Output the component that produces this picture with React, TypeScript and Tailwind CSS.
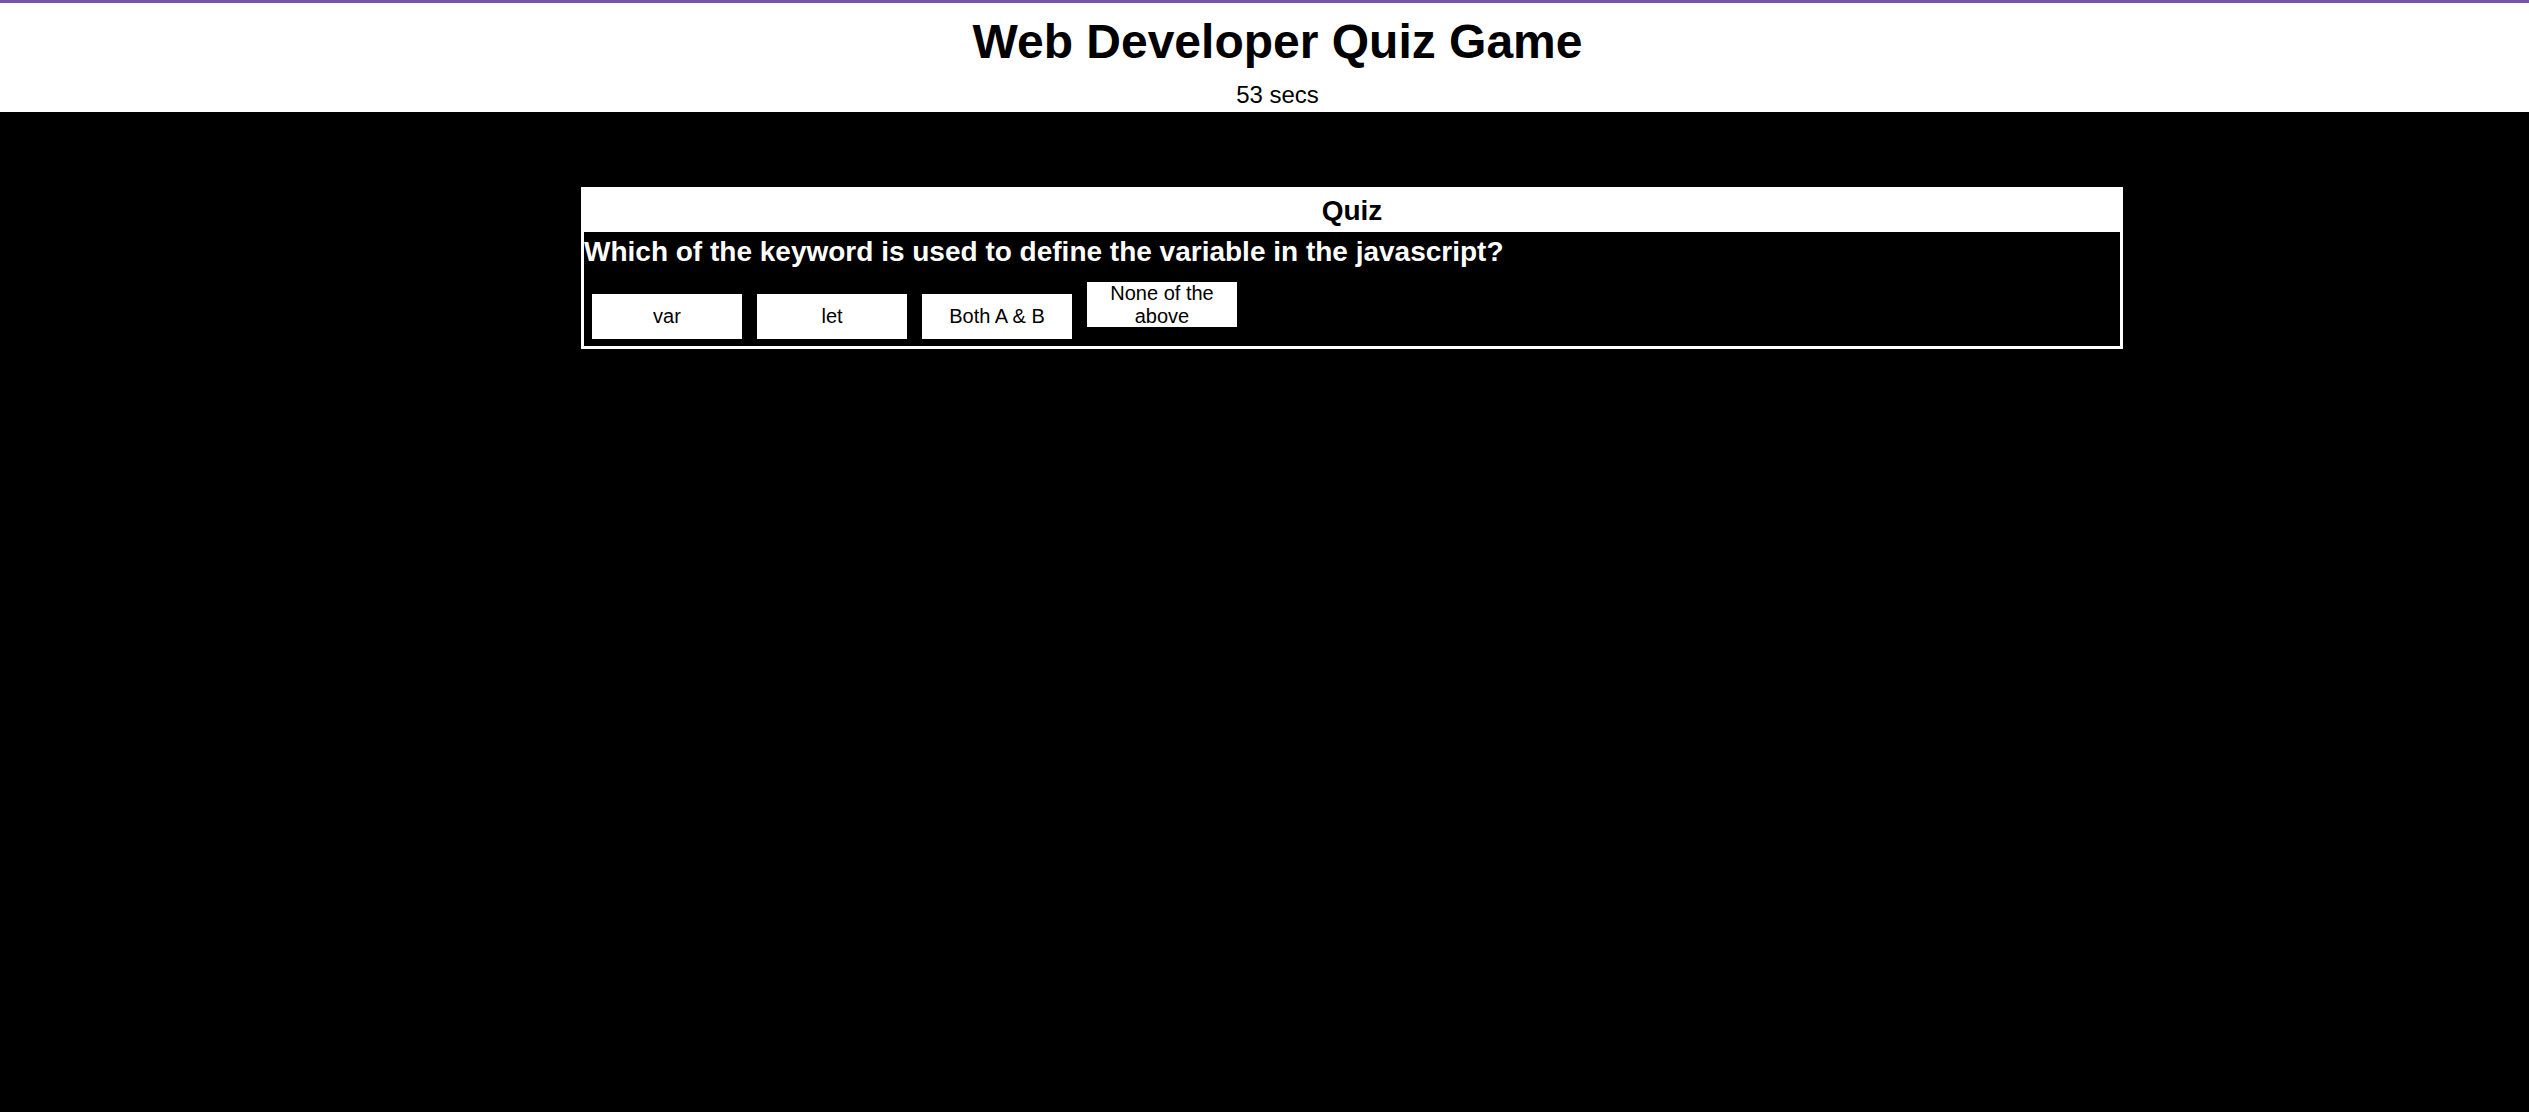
import React from 'react';

const options = ['var', 'let', 'Both A & B', 'None of the above'];

function QuizCard() {
  return (
    <div className="ml-[581px] mt-[75px] w-[1542px] border-[3px] border-white bg-white">
      <div className="flex h-[42px] items-center justify-center">
        <h2 className="text-[28px] font-bold leading-[32px] text-black">Quiz</h2>
      </div>
      <div className="bg-black pt-[4px] pb-[7px] text-white">
        <h3 className="text-[28px] font-bold leading-[32px]">
          Which of the keyword is used to define the variable in the javascript?
        </h3>
        <div className="mt-[14px] text-[20px]">
          {options.map((opt, i) => (
            <button
              key={opt}
              className={
                'inline-block h-[45px] w-[150px] bg-white align-baseline text-[20px] leading-[23px] text-black ' +
                (i === 0 ? 'ml-[8px]' : 'ml-[15px]')
              }
            >
              {opt}
            </button>
          ))}
        </div>
      </div>
    </div>
  );
}

export default function App() {
  return (
    <div className="h-screen overflow-hidden bg-black font-['Liberation_Sans',Arial,sans-serif]">
      <header className="border-t-[3px] border-[#7851a9] bg-white pt-[11px] pb-[4px] pl-[26px] text-center text-black">
        <h1 className="text-[48px] font-bold leading-[55px]">Web Developer Quiz Game</h1>
        <div className="mt-[13px] text-[24px] leading-[26px]">53 secs</div>
      </header>
      <QuizCard />
    </div>
  );
}
